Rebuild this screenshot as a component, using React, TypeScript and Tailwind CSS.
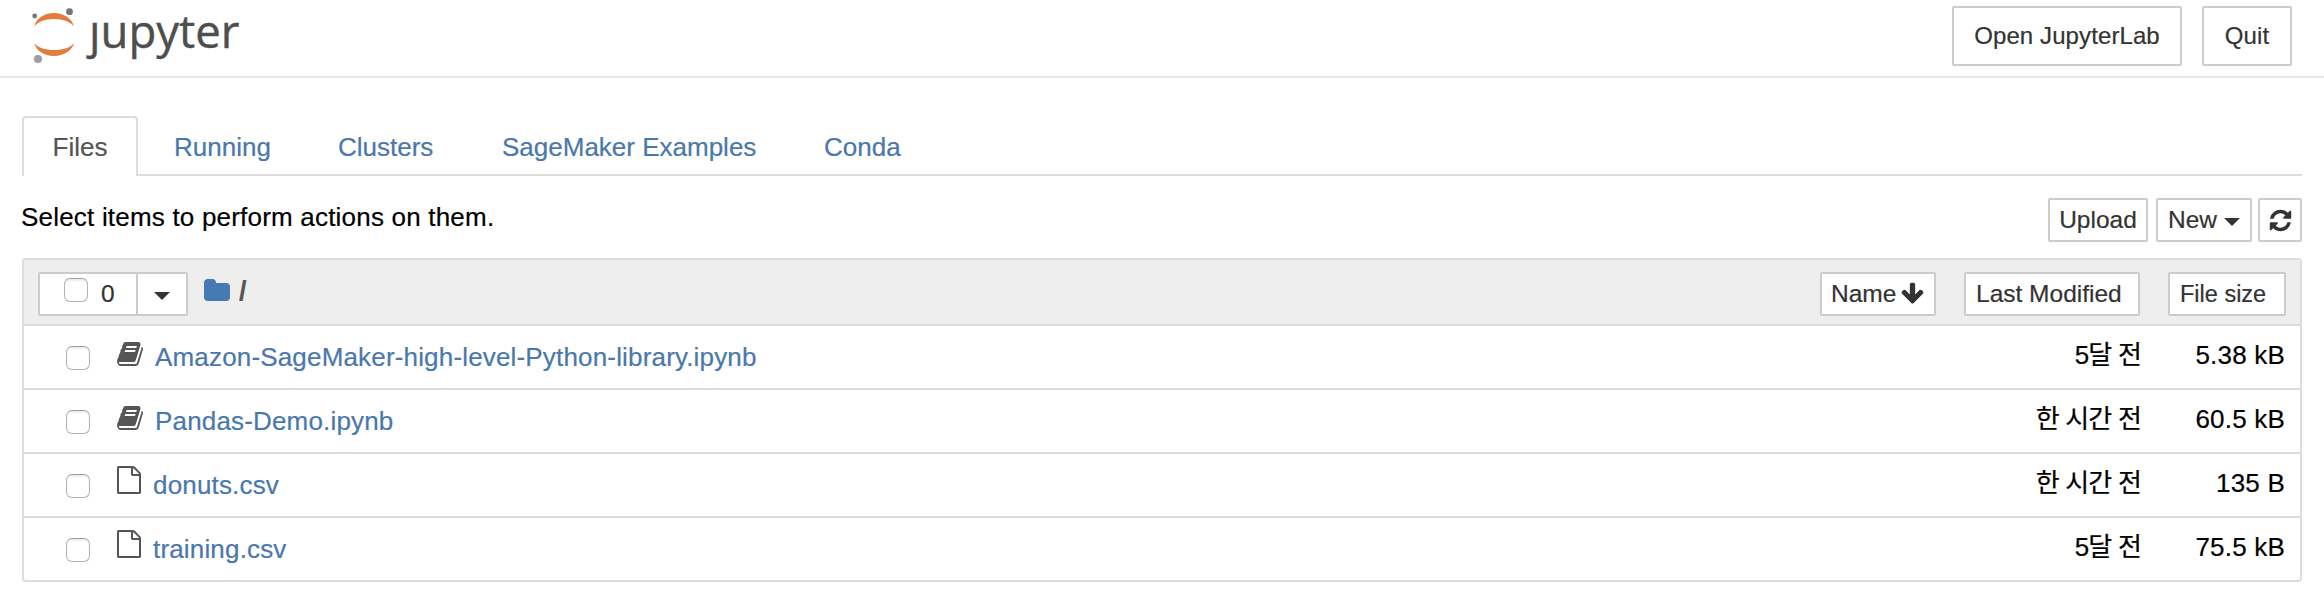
import type { ReactNode } from "react";

const glyphs = {
  file: "M1596 380q28 28 48 76t20 88v1152q0 40-28 68t-68 28h-1344q-40 0-68-28t-28-68v-1600q0-40 28-68t68-28h896q40 0 88 20t76 48zm-444-244v376h376q-10-29-22-41l-313-313q-12-12-41-22zm384 1528v-1024h-416q-40 0-68-28t-28-68v-416h-768v1536h1280z",
  book: "M1703 478q40 57 18 129l-275 906q-19 64-76.5 107.5t-122.5 43.5h-923q-77 0-148.5-53.5t-99.5-131.5q-24-67-2-127 0-4 3-27t4-37q1-8-3-21.5t-3-19.5q2-11 8-21t16.5-23.5 16.5-23.5q23-38 45-91.5t30-91.5q3-10 .5-30t-.5-28q3-11 17-28t17-23q21-36 42-92t25-90q1-9-2.5-32t.5-28q4-13 22-30.5t22-22.5q19-26 42.5-84.5t27.5-96.5q1-8-3-25.5t-2-26.5q2-8 9-18t18-23 17-21q8-12 16.5-30.5t15-35 16-36 19.5-32 26.5-23.5 36-11.5 47.5 5.5l-1 3q38-9 51-9h761q74 0 114 56t18 130l-274 906q-36 119-71.5 153.5t-128.5 34.5h-869q-27 0-38 15-11 16-1 43 24 70 144 70h923q29 0 56-15.5t35-41.5l300-987q7-22 5-57 38 15 59 43zm-1064 2q-4 13 2 22.5t20 9.5h608q13 0 25.5-9.5t16.5-22.5l21-64q4-13-2-22.5t-20-9.5h-608q-13 0-25.5 9.5t-16.5 22.5zm-83 256q-4 13 2 22.5t20 9.5h608q13 0 25.5-9.5t16.5-22.5l21-64q4-13-2-22.5t-20-9.5h-608q-13 0-25.5 9.5t-16.5 22.5z",
  refresh: "M1639 1056q0 5-1 7-64 268-268 434.5t-478 166.5q-146 0-282.5-55t-243.5-157l-129 129q-19 19-45 19t-45-19-19-45v-448q0-26 19-45t45-19h448q26 0 45 19t19 45-19 45l-137 137q71 66 161 102t187 36q134 0 250-65t186-179q11-17 53-117 8-23 30-23h192q13 0 22.5 9.5t9.5 22.5zm25-800v448q0 26-19 45t-45 19h-448q-26 0-45-19t-19-45 19-45l138-138q-148-137-349-137-134 0-250 65t-186 179q-11 17-53 117-8 23-30 23h-199q-13 0-22.5-9.5t-9.5-22.5v-7q65-268 270-434.5t480-166.5q146 0 284 55.5t245 156.5l130-129q19-19 45-19t45 19 19 45z",
  folder: "M1728 608v704q0 92-66 158t-158 66h-1216q-92 0-158-66t-66-158v-960q0-92 66-158t158-66h320q92 0 158 66t66 158v32h672q92 0 158 66t66 158z",
  arrowDown: "M1675 832q0 53-37 90l-651 652q-39 37-91 37-53 0-90-37l-651-652q-38-36-38-90 0-53 38-91l74-75q39-37 91-37 53 0 90 37l294 294v-704q0-52 38-90t90-38h128q52 0 90 38t38 90v704l294-294q37-37 90-37 52 0 91 37l75 75q37 39 37 91z",
};

function Glyph({ name, className = "" }: { name: keyof typeof glyphs; className?: string }) {
  return (
    <svg viewBox="0 0 1792 1792" fill="currentColor" className={`shrink-0 ${className}`} aria-hidden="true">
      <path d={glyphs[name]} />
    </svg>
  );
}

function Caret({ className = "" }: { className?: string }) {
  return (
    <svg viewBox="0 0 16 8" fill="currentColor" className={`h-2 w-4 shrink-0 ${className}`} aria-hidden="true">
      <path d="M0 0h16L8 8z" />
    </svg>
  );
}

function Checkbox({ className = "" }: { className?: string }) {
  return (
    <span
      role="checkbox"
      aria-checked="false"
      className={`block size-6 shrink-0 rounded-[6px] border-[1.5px] border-[#b4b4b4] border-t-[#9c9c9c] bg-white shadow-[inset_0_2px_2px_#eeeeee] ${className}`}
    />
  );
}

function Button({ className, children }: { className: string; children: ReactNode }) {
  return (
    <button
      className={`flex shrink-0 items-center whitespace-nowrap rounded-[2px] border-2 border-[#cccccc] bg-white text-[#333333] ${className}`}
    >
      {children}
    </button>
  );
}

function Logo() {
  return (
    <div className="flex items-start pl-[31px] pt-2">
      <svg width="46" height="56" viewBox="0 0 46 56" className="shrink-0" aria-hidden="true">
        <path d="M3.300 18.700C5 10.500 13 5 23 5s18 5.500 20.100 13.700C40 14 32 11 23 11S6.400 14 3.300 18.700z" fill="#e27d3d" />
        <path d="M3.300 35C5 42.500 13 48 23 48s18-5.500 20.100-13C40 39.500 32 42 23 42S6.400 39.500 3.300 35z" fill="#e27d3d" />
        <circle cx="38.500" cy="3.700" r="3.400" fill="#767677" />
        <circle cx="3.700" cy="8" r="2.400" fill="#767677" />
        <circle cx="7" cy="51" r="4.100" fill="#9e9e9e" />
      </svg>
      <div className="-mt-[9px] pl-[12px] font-['Open_Sans','Noto_Sans',sans-serif] text-[45.5px] leading-[62px] text-[#4e4e4e] [-webkit-text-stroke:0.4px_#4e4e4e]">
        <span className="inline-block [clip-path:inset(22px_-10px_-4px_-10px)]">j</span>upyter
      </div>
    </div>
  );
}

const tabs = [
  { label: "Running", box: "w-[121px] ml-[36px]" },
  { label: "Clusters", box: "w-[121px] ml-[43px]" },
  { label: "SageMaker Examples", box: "w-[280px] ml-[43px]" },
  { label: "Conda", box: "w-[100px] ml-[42px]" },
];

const files: { icon: "book" | "file"; name: string; modified: string; size: string }[] = [
  { icon: "book", name: "Amazon-SageMaker-high-level-Python-library.ipynb", modified: "5달 전", size: "5.38 kB" },
  { icon: "book", name: "Pandas-Demo.ipynb", modified: "한 시간 전", size: "60.5 kB" },
  { icon: "file", name: "donuts.csv", modified: "한 시간 전", size: "135 B" },
  { icon: "file", name: "training.csv", modified: "5달 전", size: "75.5 kB" },
];

export default function App() {
  return (
    <div className="h-[600px] w-[2324px] overflow-hidden bg-white font-['Liberation_Sans','Noto_Sans_CJK_KR',sans-serif] text-[26px] leading-9 text-black [-webkit-text-stroke:0.2px]">
      <header className="flex h-[78px] items-start justify-between border-b-2 border-[#e7e7e7] pr-8">
        <Logo />
        <div className="flex gap-5 pt-[6px] text-[24px] tracking-[0.1px]">
          <Button className="h-[60px] w-[230px] justify-center">Open JupyterLab</Button>
          <Button className="h-[60px] w-[90px] justify-center">Quit</Button>
        </div>
      </header>

      <main className="px-[22px] pt-[38px]">
        <nav className="flex h-[60px] whitespace-nowrap text-[#4a78ab]">
          <div className="flex w-[116px] items-center justify-center rounded-t-[4px] border-2 border-b-0 border-[#dddddd] text-[#555555]">
            Files
          </div>
          <div className="flex flex-1 items-center border-b-2 border-[#dddddd] pt-[3px]">
            {tabs.map((tab) => (
              <a key={tab.label} className={tab.box}>
                {tab.label}
              </a>
            ))}
          </div>
        </nav>

        <div className="flex h-[82px] items-start justify-between">
          <p className="-ml-px pt-[23px] tracking-[0.2px]">Select items to perform actions on them.</p>
          <div className="flex pt-[22px] text-[24.5px]">
            <Button className="h-11 w-[100px] justify-center pb-px">Upload</Button>
            <Button className="ml-2 h-11 w-24 pb-px pl-[10px]">
              New
              <Caret className="ml-[7px] mt-1" />
            </Button>
            <Button className="ml-[6px] h-11 w-11 justify-center">
              <Glyph name="refresh" className="size-[25px]" />
            </Button>
          </div>
        </div>

        <section className="rounded-[4px] border-2 border-[#dddddd]">
          <div className="flex h-16 items-start justify-between bg-[#eeeeee] pl-[14px] pr-[14px] pt-3 text-[24.5px]">
            <div className="flex">
              <Button className="h-11 w-[100px] rounded-r-none pl-6">
                <Checkbox className="-mt-2" />
                <span className="ml-[13px]">0</span>
              </Button>
              <Button className="-ml-[2px] h-11 w-[52px] justify-center rounded-l-none">
                <Caret className="mt-1" />
              </Button>
              <Glyph name="folder" className="ml-[15px] mt-[5px] size-7 text-[#457ab2]" />
              <span className="ml-[8px] mt-px text-[27px] font-bold text-[#555555]">/</span>
            </div>
            <div className="flex">
              <Button className="h-11 w-[116px] pb-px pl-[9px]">
                Name
                <Glyph name="arrowDown" className="ml-1 size-[25px]" />
              </Button>
              <Button className="ml-7 h-11 w-[176px] pb-px pl-[10px]">Last Modified</Button>
              <Button className="ml-7 h-11 w-[118px] pb-px pl-[10px] text-[23.5px]">File size</Button>
            </div>
          </div>
          {files.map((file) => (
            <div key={file.name} className="flex h-16 items-start border-t-2 border-[#dddddd] pl-[42px] pr-[15px]">
              <Checkbox className="mt-5" />
              <Glyph
                name={file.icon}
                className={
                  file.icon === "book"
                    ? "ml-[26px] mt-[14px] size-7 text-[#555555]"
                    : "ml-[25px] mt-3 size-7 text-[#555555]"
                }
              />
              <a
                className={`flex-1 pt-[13px] tracking-[0.17px] text-[#4a78ab] ${file.icon === "book" ? "ml-[11px]" : "ml-[10px]"}`}
              >
                {file.name}
              </a>
              <span className="pt-[11px] tracking-[-0.8px]">{file.modified}</span>
              <span className="w-[144px] pt-[11px] text-right tracking-[0.2px]">{file.size}</span>
            </div>
          ))}
        </section>
      </main>
    </div>
  );
}
